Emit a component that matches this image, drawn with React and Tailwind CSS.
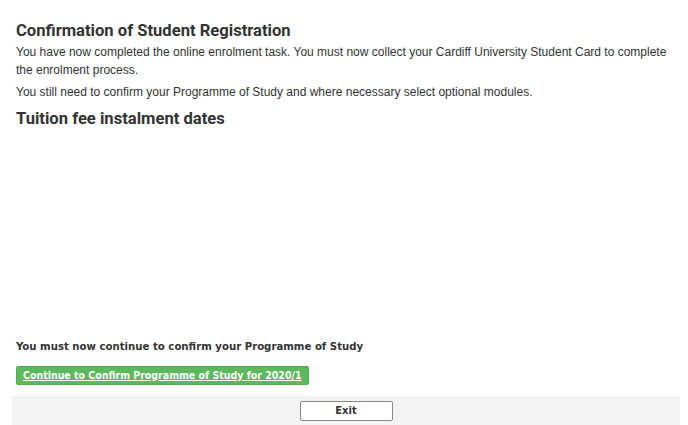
import React from "react";

const App = () => {
  return (
    <div className="w-[688px] h-[425px] bg-white font-['Liberation_Sans',Arial,sans-serif] text-[#333] flex flex-col">
      <div className="px-4 pt-[21px] flex-1 flex flex-col">
        {/* Confirmation header */}
        <h1 className="text-[16.6px] font-bold leading-[20px] text-[#333] font-['Roboto',sans-serif]">
          Confirmation of Student Registration
        </h1>
        <p className="text-[12px] leading-[18px] mt-[2px]">
          You have now completed the online enrolment task. You must now collect your Cardiff University Student Card to complete the enrolment process.
        </p>
        <p className="text-[12px] leading-[18px] mt-[4px]">
          You still need to confirm your Programme of Study and where necessary select optional modules.
        </p>
        <h2 className="text-[16.6px] font-bold leading-[20px] mt-[8px] font-['Roboto',sans-serif]">
          Tuition fee instalment dates
        </h2>
        <div className="flex-1" />
        <p className="text-[11.3px] font-bold leading-[16px] font-['DejaVu_Sans_Condensed','DejaVu_Sans',sans-serif]">
          You must now continue to confirm your Programme of Study
        </p>
        <div className="mt-[7px] mb-[10px]">
          <a
            href="#"
            className="inline-block bg-[#5cb85c] border border-[#4cae4c] rounded-[2px] px-[6px] h-[19px] leading-[17px] text-white text-[10.5px] font-bold underline font-['DejaVu_Sans_Condensed','DejaVu_Sans',sans-serif]"
          >
            Continue to Confirm Programme of Study for 2020/1
          </a>
        </div>
      </div>
      {/* Footer bar */}
      <div className="mx-[12px] mr-[8px] h-[29px] bg-[#f3f3f3] flex justify-center pt-[5px]">
        <button className="w-[93px] h-[20px] bg-white border border-[#888] rounded-[2px] text-[11px] font-bold text-[#333] font-['DejaVu_Sans_Condensed','DejaVu_Sans',sans-serif]">
          Exit
        </button>
      </div>
    </div>
  );
};

export default App;
